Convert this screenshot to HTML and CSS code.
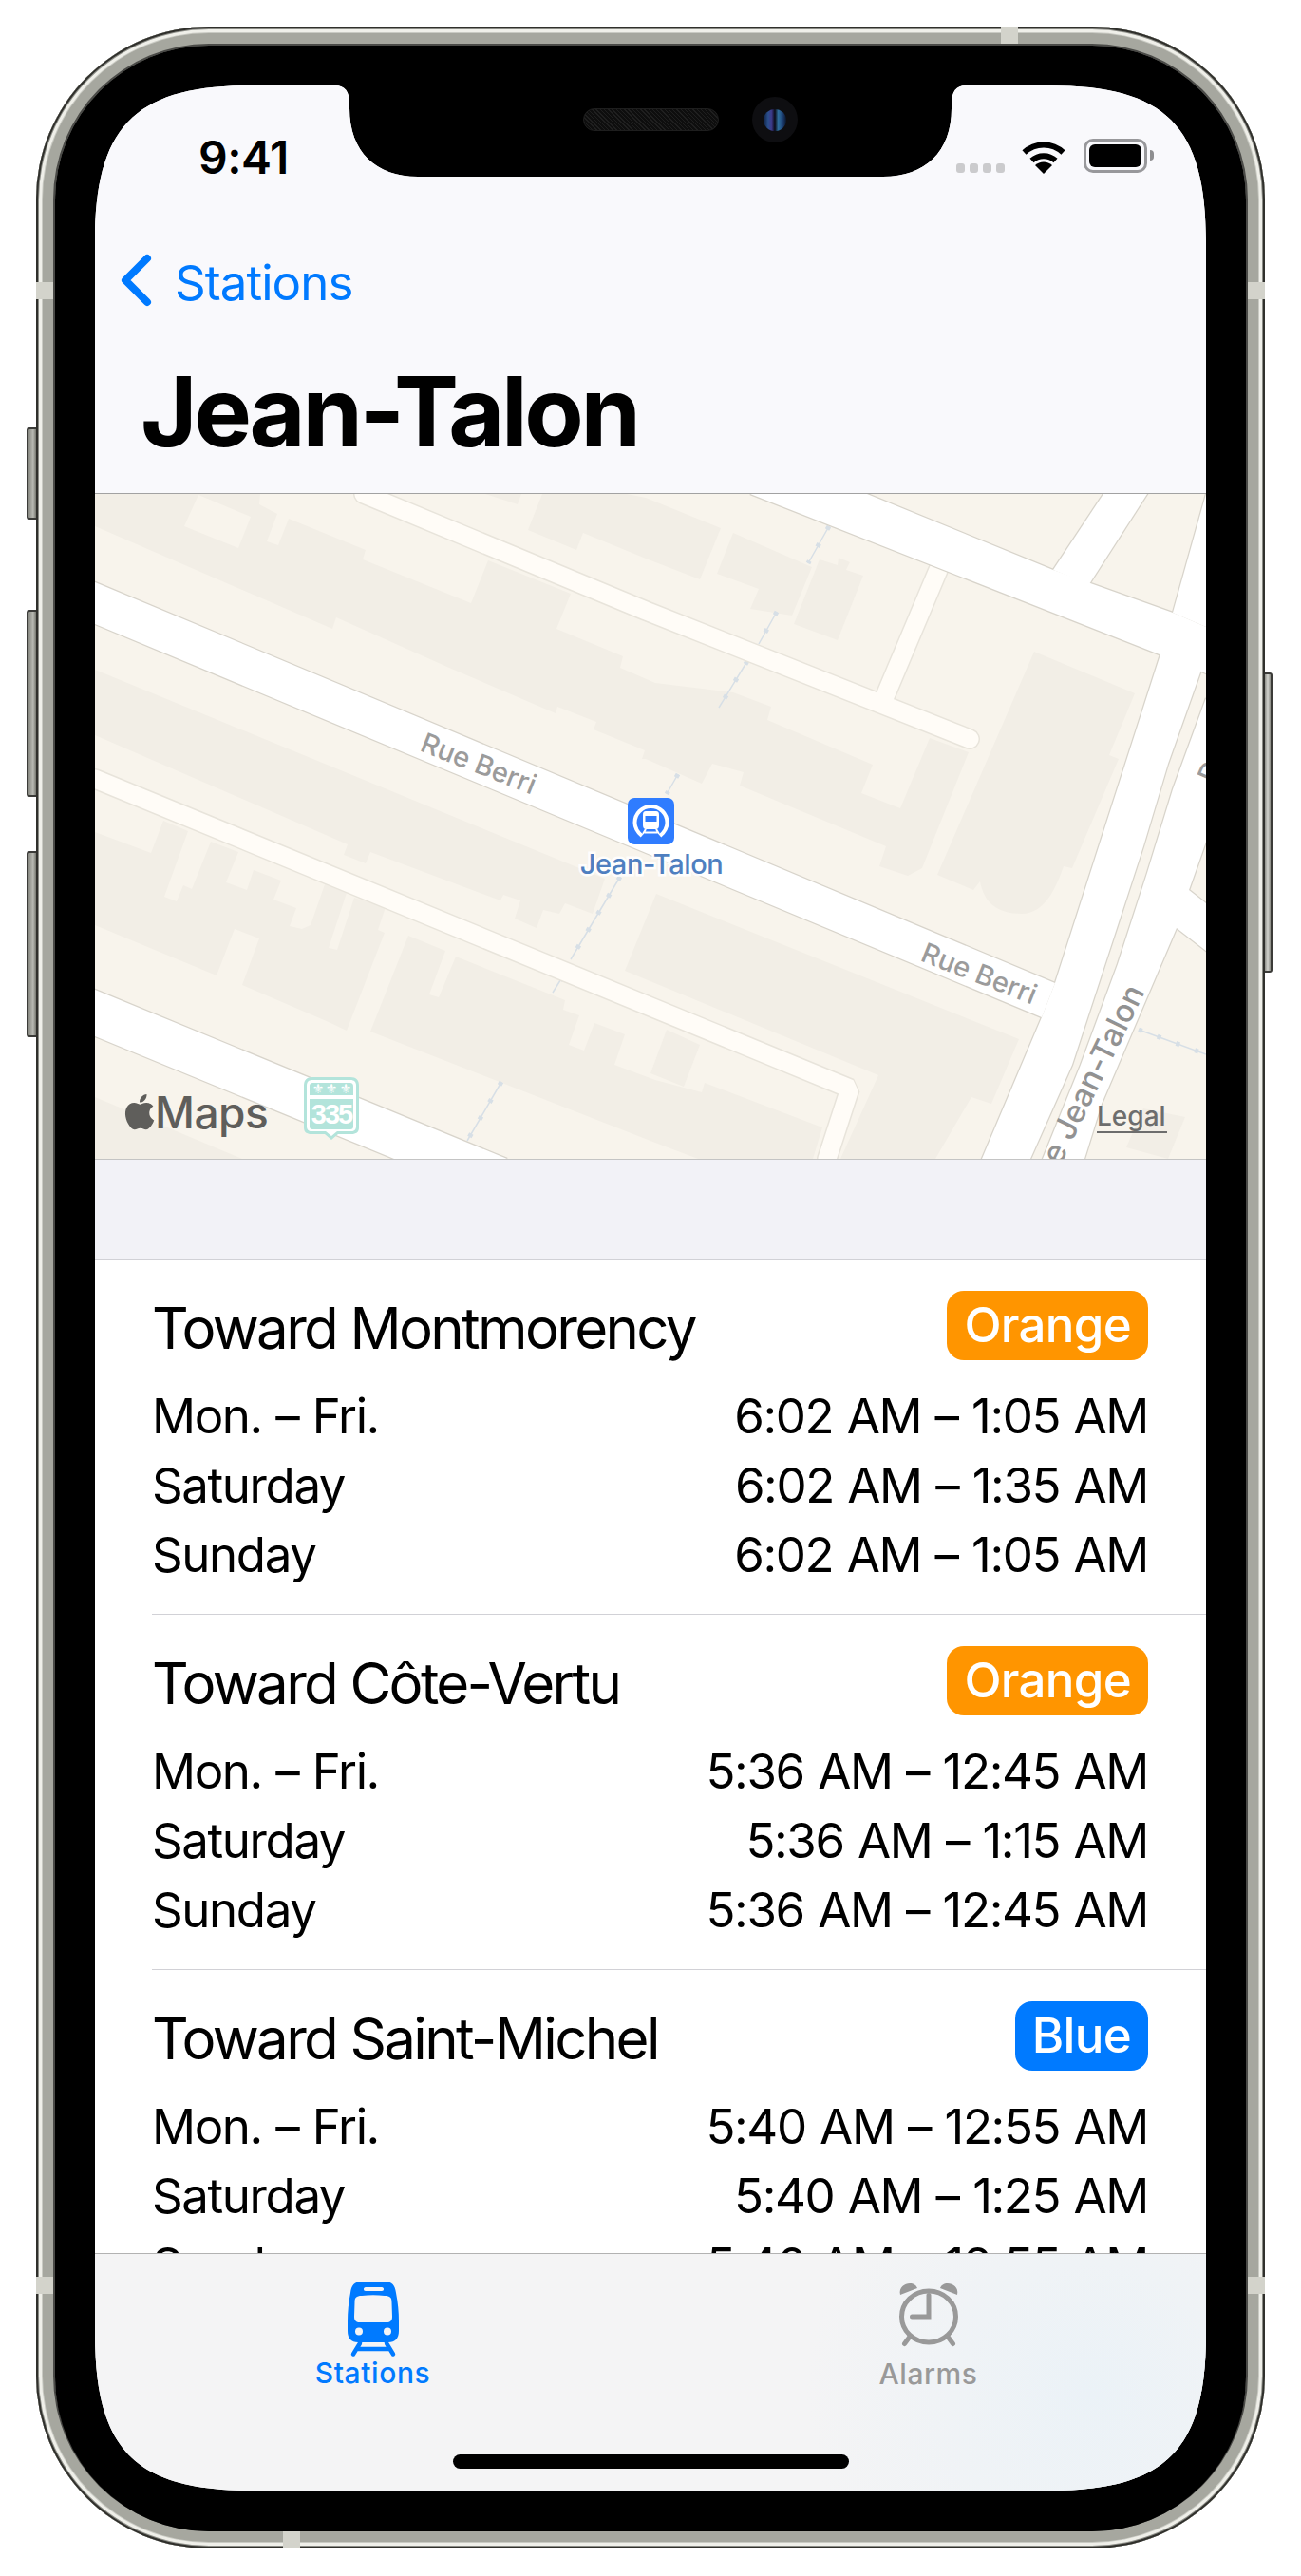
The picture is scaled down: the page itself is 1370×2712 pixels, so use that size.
FILE: index.html
```html
<!DOCTYPE html>
<html lang="en">
<head>
<meta charset="utf-8">
<title>Jean-Talon</title>
<link rel="stylesheet" href="styles.css">
</head>
<body>
<main class="page">
  <div class="device">
    <i class="btn btn-mute"></i><i class="btn btn-up"></i><i class="btn btn-down"></i><i class="btn btn-power"></i>
    <i class="ant ant-l1"></i><i class="ant ant-r1"></i><i class="ant ant-l2"></i><i class="ant ant-r2"></i>
    <i class="ant-h ant-top"></i><i class="ant-h ant-bottom"></i>
    <div class="bezel">
      <div class="speaker"></div>
      <div class="camera"><span class="lens"></span></div>
      <div class="screen">
        <header class="nav">
          <div class="status">
            <span class="time">9:41</span>
            <div class="status-icons">
              <div class="signal"><i></i><i></i><i></i><i></i></div>
              <svg class="wifi" viewBox="0 0 48 37"><path class="wifi-arc" d="M3.5 14.5a30 30 0 0 1 41 0"/><path class="wifi-arc" d="M11.5 23a18.5 18.5 0 0 1 25 0"/><path class="wifi-dot" d="M24 37 15 28a13 13 0 0 1 18 0z"/></svg>
              <div class="battery"><span class="battery-level"></span></div>
              <span class="battery-nub"></span>
            </div>
          </div>
          <a class="back">
            <svg class="chevron" viewBox="0 0 33 56"><path d="M28 5 5 28l23 23"/></svg>
            <span>Stations</span>
          </a>
          <h1 class="title">Jean-Talon</h1>
        </header>

        <section class="map">
          <svg class="map-svg" viewBox="100 520 1170 700">
            <rect class="land" x="100" y="520" width="1170" height="700"/>
            <!-- buildings -->
            <path class="bld" d="M100 520H274L273 531 292 541 281 570 293 574 304 546 385 579 382 589 496 635 514 590 601 625 586 662 656 691 653 703 690 719 772 729 812 744 808 758 919 805 907 835 948 851 979 777 1020 792 971 914 956 922 926 912 933 891 779 827 783 813 750 804 739 825 680 799 676 799 679 790 625 768 628 760 587 744 585 751 473 703 354 650 350 662 100 554Z"/>
            <path class="land" d="M209 521 264 544 251 577 194 554Z"/>
            <path class="bld" d="M556 558 571 520H660L680 524 759 556 737 610 680 588 614 561 607 579Z"/>
            <path class="bld" d="M511 520H549L545 531Z"/>
            <path class="bld" d="M772 561 855 597 834 648 790 641 799 620 755 604Z"/>
            <path class="bld" d="M863 589 882 595 883 587 895 592 891 600 909 606 882 674 836 657Z"/>
            <path class="bld" d="M1089 686 1195 730 1168 795 1178 799 1129 914 1120 912C1112 935 1100 962 1076 962 1050 962 1036 950 1032 928L1025 937 987 921Z"/>
            <path class="bld" d="M100 705 637 925 624 962 595 951 589 962 572 958 565 977 542 967 548 948 530 942 527 948 390 897 385 909 362 900 366 889 100 774Z"/>
            <path class="bld" d="M691 941 1073 1094 1044 1162 1023 1155 985 1220H885L925 1132 658 1022Z"/>
            <path class="bld" d="M100 876 159 898 172 864 198 875 173 944 186 949 193 932 202 936 222 886 251 897 238 929 260 937 267 916 296 927 288 947 312 956 305 975 318 978 327 974 342 931 365 940 346 998 355 1000 373 945 406 955 398 979 405 982 365 1085 346 1076 255 1037 273 988 247 978 228 1027 100 974Z"/>
            <path class="bld" d="M430 985 469 1001 452 1047 462 1050 480 1007 595 1053 593 1063 610 1069 599 1100 615 1106 626 1077 658 1089 647 1121 690 1137 739 1150 742 1140 866 1187 856 1220H735L690 1203 390 1086Z"/>
            <path class="bld" d="M702 1084 737 1100 720 1144 685 1130Z"/>
            <path class="bld" d="M100 1155 255 1220H100Z"/>
            <path class="bld" d="M1204 1167 1248 1176 1230 1220 1186 1208Z"/>
            <!-- rail -->
            <path class="rail" d="M873 554 851 593M818 644 799 678M787 696 757 745M714 815 702 836M653 923 601 1010M592 1029 582 1045M528 1139 492 1201M1199 1084 1270 1110"/>
            <path class="rail-dots" d="M873 554 851 593M818 644 799 678M787 696 757 745M714 815 702 836M653 923 601 1010M592 1029 582 1045M528 1139 492 1201M1199 1084 1270 1110"/>
            <!-- cream streets -->
            <path class="minor-edge" d="M383 520 680 643 1021 778M988 600 932 733M100 820 895 1146 871 1220"/>
            <path class="minor" d="M383 520 680 643 1021 778M988 600 932 733M100 820 895 1146 871 1220"/>
            <!-- main roads -->
            <g class="road-edge">
              <path d="M100 613 1111 1035 1097 1071 100 657Z"/>
              <path d="M100 1042 534 1220H415L100 1091Z"/>
              <path d="M790 520 1221 689 1270 709V660L1235 645 1109 600 913 520Z"/>
              <path d="M1109 600 1162 520H1208L1147 615Z"/>
              <path d="M1235 645 1270 520V660Z"/>
              <path d="M1222 689 1111 1035 1097 1071 1034 1220H1085L1129 1121 1177 974 1204 891 1230 804 1270 691V660Z"/>
              <path d="M1270 735 1235 831 1208 919 1177 1015 1138 1121 1098 1220H1142L1160 1162 1239 977 1270 1001V951L1252 937 1270 886Z"/>
            </g>
            <g class="road-fill">
              <path d="M100 613 1111 1035 1097 1071 100 657Z"/>
              <path d="M100 1042 534 1220H415L100 1091Z"/>
              <path d="M790 520 1221 689 1270 709V660L1235 645 1109 600 913 520Z"/>
              <path d="M1109 600 1162 520H1208L1147 615Z"/>
              <path d="M1235 645 1270 520V660Z"/>
              <path d="M1222 689 1111 1035 1097 1071 1034 1220H1085L1129 1121 1177 974 1204 891 1230 804 1270 691V660Z"/>
              <path d="M1270 735 1235 831 1208 919 1177 1015 1138 1121 1098 1220H1142L1160 1162 1239 977 1270 1001V951L1252 937 1270 886Z"/>
            </g>
            <!-- street labels -->
            <text class="street" transform="translate(441 790) rotate(21.5)">Rue Berri</text>
            <text class="street" transform="translate(968 1011) rotate(21.5)">Rue Berri</text>
            <text class="street street-road" transform="translate(1206 1044) rotate(-64)">Rue Jean-Talon</text>
            <text class="street" transform="translate(1279 826) rotate(-66)">Drolet</text>
            <!-- station pin -->
            <g transform="translate(661 840)">
              <rect class="pin" width="49" height="49" rx="7"/>
              <path class="pin-arch" d="M15 40C9 35 7.500 31 7.500 26A17 17 0 0 1 41.500 26C41.500 31 40 35 34 40"/>
              <path class="pin-train" d="M19 14H30C32 14 33 15 33 18V29C33 32 31 33 30 33H19C18 33 16 32 16 29V18C16 15 17 14 19 14ZM18.500 19V25H30.500V19Z"/>
              <path class="pin-rail" d="M19 33 16 38M30 33 33 38M18 36.500H31"/>
            </g>
            <text class="pin-label pin-halo" x="686" y="920">Jean-Talon</text>
            <text class="pin-label" x="686" y="920">Jean-Talon</text>
            <!-- route shield -->
            <g transform="translate(320 1134)">
              <path class="shield" d="M9 0H49C55 0 58 3 58 9V53C58 58 55 60 50 60H36L29 66 22 60H8C3 60 0 58 0 53V9C0 3 3 0 9 0Z"/>
              <path class="shield-white" d="M9 3H49C53 3 55 5 55 9V52C55 55 53 57 50 57H35L29 62 23 57H8C5 57 3 55 3 52V9C3 5 5 3 9 3Z"/>
              <path class="shield" d="M10 6H48C51 6 52 7 52 10V19H6V10C6 7 7 6 10 6ZM6 23H52V52C52 54 51 55 49 55H9C7 55 6 54 6 52Z"/>
              <text class="fleur" x="15" y="17">⚜</text><text class="fleur" x="29" y="17">⚜</text><text class="fleur" x="44" y="17">⚜</text>
              <text class="shield-num" x="29" y="49">335</text>
            </g>
            <!-- attribution -->
            <g transform="translate(128.500 1152) scale(1.55)">
              <path class="maps" d="M12.152 6.896c-.948 0-2.415-1.078-3.960-1.040-2.040.027-3.910 1.183-4.961 3.014-2.117 3.675-.546 9.103 1.519 12.090 1.013 1.454 2.208 3.090 3.792 3.039 1.520-.065 2.090-.987 3.935-.987 1.831 0 2.350.987 3.960.948 1.637-.026 2.676-1.480 3.676-2.948 1.156-1.688 1.636-3.325 1.662-3.415-.039-.013-3.182-1.221-3.220-4.857-.026-3.040 2.480-4.494 2.597-4.559-1.429-2.090-3.623-2.324-4.390-2.376-2-.156-3.675 1.090-4.610 1.090zM15.530 3.830c.843-1.012 1.400-2.427 1.245-3.830-1.207.052-2.662.805-3.532 1.818-.780.896-1.454 2.338-1.273 3.714 1.338.104 2.715-.688 3.559-1.701"/>
            </g>
            <text class="maps maps-word" x="163" y="1188">Maps</text>
            <text class="legal" x="1155" y="1185">Legal</text>
            <rect class="legal" x="1155" y="1191" width="74" height="2"/>
          </svg>
        </section>

        <div class="spacer"></div>

        <div class="list">
          <article class="line">
            <div class="line-head"><h2>Toward Montmorency</h2><span class="badge badge-orange">Orange</span></div>
            <div class="hours"><span>Mon. – Fri.</span><span>6:02 AM – 1:05 AM</span></div>
            <div class="hours"><span>Saturday</span><span>6:02 AM – 1:35 AM</span></div>
            <div class="hours"><span>Sunday</span><span>6:02 AM – 1:05 AM</span></div>
          </article>
          <article class="line">
            <div class="line-head"><h2>Toward Côte-Vertu</h2><span class="badge badge-orange">Orange</span></div>
            <div class="hours"><span>Mon. – Fri.</span><span>5:36 AM – 12:45 AM</span></div>
            <div class="hours"><span>Saturday</span><span>5:36 AM – 1:15 AM</span></div>
            <div class="hours"><span>Sunday</span><span>5:36 AM – 12:45 AM</span></div>
          </article>
          <article class="line">
            <div class="line-head"><h2>Toward Saint-Michel</h2><span class="badge badge-blue">Blue</span></div>
            <div class="hours"><span>Mon. – Fri.</span><span>5:40 AM – 12:55 AM</span></div>
            <div class="hours"><span>Saturday</span><span>5:40 AM – 1:25 AM</span></div>
            <div class="hours"><span>Sunday</span><span>5:40 AM – 12:55 AM</span></div>
          </article>
        </div>

        <nav class="tabbar">
          <a class="tab tab-on">
            <svg class="tab-icon" viewBox="0 0 54 80">
              <path class="train-body" fill-rule="evenodd" d="M15 0H39C47 0 50 4 51 12 53 22 54 32 54 42V52C54 60 50 64 43 64H11C4 64 0 60 0 52V42C0 32 1 22 3 12 4 4 7 0 15 0ZM19 6C17.500 6 17 7 17 8S17.500 10 19 10H36C37.500 10 38 9 38 8S37.500 6 36 6ZM15 15C9 15 7.500 17 7.500 22L7 37C7 41 9 43 13 43H41C45 43 47 41 47 37L46.500 22C46.500 17 45 15 39 15 31 14 23 14 15 15ZM12 48.500A4 4 0 1 0 12 56.500 4 4 0 1 0 12 48.500ZM42 48.500A4 4 0 1 0 42 56.500 4 4 0 1 0 42 48.500Z"/>
              <path class="train-rails" d="M13 65 6 76.500M41 65 48 76.500M10 71H44"/>
            </svg>
            <span>Stations</span>
          </a>
          <a class="tab tab-off">
            <svg class="tab-icon" viewBox="0 0 66 68">
              <ellipse class="alarm-line" cx="33" cy="36" rx="28.500" ry="27"/>
              <path class="alarm-line" d="M33 13.500V36H15.500M13 57 7.500 64.500M53 57 58.500 64.500"/>
              <path class="alarm-bell" d="M3 13C1 5 8 1 13 1 17 1 20 3 21 6ZM63 13C65 5 58 1 53 1 49 1 46 3 45 6Z"/>
            </svg>
            <span>Alarms</span>
          </a>
          <span class="home"></span>
        </nav>
      </div>
    </div>
  </div>
</main>
</body>
</html>
```
FILE: styles.css
```css
* { box-sizing: border-box; }
html, body { margin: 0; padding: 0; background: #fff; }
body { font-family: Inter, "Liberation Sans", sans-serif; color: #000; }
h1, h2 { margin: 0; }
i { display: block; }

.page { padding: 28px 38px 29px; }

/* device shell */
.device {
  position: relative;
  width: 1294px;
  height: 2655px;
  padding: 20px 20px 18px;
  border-radius: 182px;
  background: #a6a79f;
  box-shadow:
    inset 0 0 0 2px #30302c,
    inset 0 0 0 3px #8a8b85,
    inset 0 0 0 6px #efefe9,
    inset 0 0 0 7px #c9cac3,
    inset 0 0 0 18px #a6a79f,
    inset 0 0 0 20px #4a4a47;
}
.bezel {
  position: relative;
  height: 2617px;
  padding: 42px;
  border-radius: 162px;
  background: #000;
}
.btn {
  position: absolute;
  width: 10px;
  left: -10px;
  background: linear-gradient(90deg, #85867f, #b9bab3 60%, #76776f);
  border: 2px solid #3b3b38;
  border-right: 0;
  border-radius: 3px 0 0 3px;
}
.btn-mute { top: 422px; height: 97px; }
.btn-up { top: 614px; height: 197px; }
.btn-down { top: 868px; height: 196px; }
.btn-power {
  left: auto;
  right: -8px;
  width: 8px;
  top: 680px;
  height: 316px;
  border: 2px solid #3b3b38;
  border-left: 0;
  border-radius: 0 3px 3px 0;
  background: linear-gradient(90deg, #8d8e87, #d4d5cf 50%, #85867f);
}
.ant { position: absolute; width: 18px; height: 18px; background: #d3d3cb; }
.ant-l1 { left: 0; top: 269px; }
.ant-r1 { right: 0; top: 269px; }
.ant-l2 { left: 0; top: 2369px; }
.ant-r2 { right: 0; top: 2369px; }
.ant-h { position: absolute; width: 18px; height: 18px; background: #d3d3cb; }
.ant-top { left: 1016px; top: 0; }
.ant-bottom { left: 260px; bottom: 0; }

.speaker {
  position: absolute;
  left: 556px;
  top: 66px;
  width: 143px;
  height: 24px;
  border-radius: 12px;
  border: 1px solid #1e1e1e;
  background: repeating-linear-gradient(45deg, #1f1f1f 0 1px, #0e0e0e 1px 3px);
}
.camera {
  position: absolute;
  left: 734px;
  top: 54px;
  width: 48px;
  height: 48px;
  border-radius: 50%;
  background: #0e0e11;
  display: flex;
  align-items: center;
  justify-content: center;
}
.lens {
  width: 24px;
  height: 23px;
  border-radius: 50%;
  background: linear-gradient(90deg, #0d1e3f, #2a4f8c 20%, #3d3a8a 35%, #0a0a14 50%, #2f6f9f 65%, #1b3d70 85%, #0a1428);
}

/* screen, with the notch cut out */
.screen {
  width: 1170px;
  height: 2533px;
  display: flex;
  flex-direction: column;
  background: #fff;
  clip-path: path("M165 0H253C263 0 268 6 268 20V24C268 70 296 96 340 96H830C874 96 902 70 902 24V20C902 6 907 0 917 0H1005C1127.400 0 1170 42.600 1170 165V2367C1170 2489.400 1127.400 2532 1005 2532H165C42.600 2532 0 2489.400 0 2367V165C0 42.600 42.600 0 165 0Z");
}

/* navigation bar */
.nav {
  flex: none;
  height: 430px;
  background: #f9f9fc;
  border-bottom: 1px solid #a2a2a2;
}
.status {
  display: flex;
  justify-content: space-between;
  align-items: flex-start;
  padding: 54px 55px 0 109px;
  height: 177px;
}
.time { font-size: 48px; line-height: 44px; font-weight: 600; letter-spacing: -0.5px; }
.status-icons { display: flex; align-items: flex-start; padding-top: 2px; }
.signal { display: flex; gap: 5px; margin-top: 26px; margin-right: 17px; }
.signal i { width: 9px; height: 10px; border-radius: 3px; background: #cbcbcd; }
.wifi { width: 48px; height: 37px; margin-right: 18px; }
.wifi-arc { fill: none; stroke: #000; stroke-width: 6; }
.wifi-dot { fill: #000; }
.battery {
  width: 67px;
  height: 36px;
  padding: 3px;
  border: 3px solid #98989b;
  border-radius: 10px;
  background: transparent;
}
.battery-level { display: block; height: 100%; border-radius: 6px; background: #000; }
.battery-nub { width: 4px; height: 11px; margin: 12px 0 0 3px; border-radius: 0 4px 4px 0; background: #8e8e90; }

.back {
  display: flex;
  align-items: flex-start;
  height: 56px;
  margin-left: 27px;
  color: #007aff;
  font-size: 51px;
  line-height: 62px;
  letter-spacing: -0.95px;
}
.chevron { width: 33px; height: 56px; margin-right: 24px; }
.chevron path { fill: none; stroke: #007aff; stroke-width: 8; stroke-linecap: round; stroke-linejoin: round; }
.title {
  margin: 55px 0 0 48px;
  font-size: 102px;
  line-height: 110px;
  font-weight: 700;
  letter-spacing: -3.4px;
}

/* map */
.map { flex: none; height: 701px; background: #f8f4ec; border-bottom: 1px solid #c4c4c4; }
.map-svg { display: block; width: 1170px; height: 700px; }
.land { fill: #f8f4ec; }
.bld { fill: #f2eee6; }
.rail { fill: none; stroke: #d7dfe6; stroke-width: 1.5; }
.rail-dots { fill: none; stroke: #d7dfe6; stroke-width: 5; stroke-dasharray: 4 17; }
.minor-edge { fill: none; stroke: #e8e4db; stroke-width: 22; stroke-linecap: round; stroke-linejoin: bevel; }
.minor { fill: none; stroke: #fffcf7; stroke-width: 19; stroke-linecap: round; stroke-linejoin: bevel; }
.road-edge path { fill: #fff; stroke: #d8d4cb; stroke-width: 2.500; }
.road-fill path { fill: #fff; }
.street { font-size: 29px; font-weight: 500; fill: #9b9b9b; }
.street-road { font-size: 33px; text-anchor: end; fill: #929292; }
.pin { fill: #2f7cff; }
.pin-arch { fill: none; stroke: #fff; stroke-width: 4; }
.pin-train { fill: #fff; fill-rule: evenodd; }
.pin-rail { fill: none; stroke: #fff; stroke-width: 2; }
.pin-label { font-size: 29px; font-weight: 500; fill: #4f7fc0; text-anchor: middle; letter-spacing: -0.4px; }
.pin-halo { fill: none; stroke: rgba(255, 255, 255, 0.9); stroke-width: 5; }
.shield { fill: #b3e4db; }
.shield-white { fill: #fff; }
.fleur { font-family: "DejaVu Sans", sans-serif; font-size: 14px; fill: #fff; text-anchor: middle; }
.shield-num { font-size: 29px; font-weight: 700; fill: #fff; text-anchor: middle; letter-spacing: -2px; font-family: "Liberation Sans", sans-serif; }
.maps { fill: #5f5e5b; }
.maps-word { font-size: 46px; font-weight: 500; letter-spacing: -0.5px; }
.legal { font-size: 28px; font-weight: 500; fill: #6d6d6d; }

.spacer { flex: none; height: 105px; background: #f2f2f7; border-bottom: 1px solid #d1d1d6; }

/* list of lines */
.list { flex: 1; min-height: 0; overflow: hidden; background: #fff; padding-left: 60px; }
.line { height: 374px; padding: 33px 61px 0 0; border-bottom: 1px solid #d1d1d6; }
.line-head { display: flex; justify-content: space-between; align-items: center; height: 73px; margin-bottom: 22px; }
.line-head h2 { font-size: 60px; line-height: 73px; font-weight: 400; letter-spacing: -2.65px; padding-top: 6px; }
.badge {
  height: 73px;
  padding: 0 18px;
  border-radius: 18px;
  color: #fff;
  font-size: 51px;
  line-height: 72px;
  font-weight: 500;
  letter-spacing: -0.7px;
}
.badge-orange { background: #ff9500; }
.badge-blue { background: #007aff; }
.hours { display: flex; justify-content: space-between; font-size: 51px; line-height: 73px; letter-spacing: -1.4px; word-spacing: 1.5px; }

/* tab bar */
.tabbar {
  position: relative;
  flex: none;
  height: 251px;
  display: flex;
  border-top: 1px solid #b2b2b2;
  background: radial-gradient(circle 300px at 1049px 145px, #ebf2f7, rgba(235, 242, 247, 0)), #f4f4f5;
}
.tab { flex: 1; display: flex; flex-direction: column; align-items: center; font-size: 30px; line-height: 32px; font-weight: 500; letter-spacing: 0.6px; }
.tab-on { color: #007aff; padding-top: 29px; }
.tab-off { color: #999; padding-top: 30px; }
.tab-on .tab-icon { width: 54px; height: 80px; margin-bottom: 0; }
.tab-off .tab-icon { width: 66px; height: 68px; margin-bottom: 12px; }
.train-body { fill: #007aff; }
.train-rails { fill: none; stroke: #007aff; stroke-width: 4.500; stroke-linecap: round; }
.alarm-line { fill: none; stroke: #999; stroke-width: 5; stroke-linecap: round; }
.alarm-bell { fill: #999; }
.home {
  position: absolute;
  left: 377px;
  top: 211px;
  width: 417px;
  height: 15px;
  border-radius: 8px;
  background: #000;
}
```
